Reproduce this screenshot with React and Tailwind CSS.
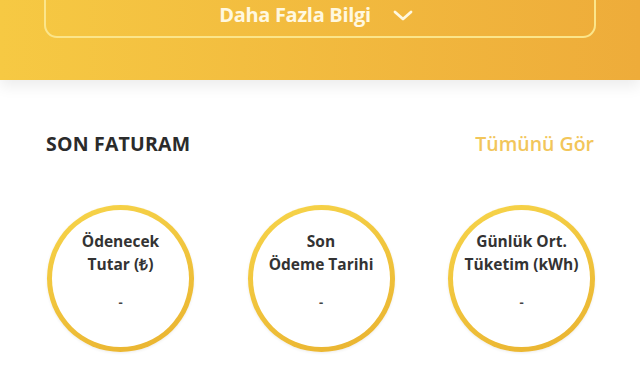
import React from "react";

function Ring({ l1, l2 }) {
  return (
    <div className="w-[147px] h-[147px] rounded-full p-[5px] bg-[linear-gradient(160deg,#f7d54a,#e9b22f)] shadow-[0_1px_3px_rgba(0,0,0,0.08)]">
      <div className="w-full h-full rounded-full bg-white flex flex-col items-center pt-[20px]">
        <div className="text-[15.5px] leading-[23px] font-bold text-[#333] text-center">{l1}</div>
        <div className="text-[15.5px] leading-[23px] font-bold text-[#333] text-center">{l2}</div>
        <div className="mt-[20px] text-[13px] leading-none font-bold text-[#444]">-</div>
      </div>
    </div>
  );
}

export default function App() {
  return (
    <div className="w-[640px] h-[375px] overflow-hidden bg-white" style={{ fontFamily: '"Open Sans", "Liberation Sans", sans-serif' }}>
      <div className="h-[80px] flex flex-col bg-[linear-gradient(90deg,#f6c943,#eeac3a)] shadow-[0_6px_14px_rgba(0,0,0,0.08)] px-[44px] relative z-10">
        <div className="-mt-[14px] h-[52px] border-2 border-[#fbe58a] rounded-[13px] flex items-end justify-center pb-[11px] pr-[6px]">
          <span className="text-[20px] font-bold text-[#fff8e0] tracking-[-0.3px] leading-none">Daha Fazla Bilgi</span>
          <svg className="ml-[20px] mb-[3px]" width="24" height="13" viewBox="0 0 24 13" fill="none">
            <path d="M4 3 L12 10 L20 3" stroke="#fff8e0" strokeWidth="2.8" strokeLinecap="round" strokeLinejoin="round" />
          </svg>
        </div>
      </div>
      <div className="flex items-center justify-between pl-[46px] pr-[46px] pt-[49px]">
        <span className="text-[19.5px] font-bold text-[#2b2b2b] tracking-[0.2px]">SON FATURAM</span>
        <span className="text-[19.5px] font-semibold text-[#f2c65a]">Tümünü Gör</span>
      </div>
      <div className="flex justify-between pl-[47px] pr-[45px] mt-[47px]">
        <Ring l1="Ödenecek" l2="Tutar (₺)" />
        <Ring l1="Son" l2="Ödeme Tarihi" />
        <Ring l1="Günlük Ort." l2="Tüketim (kWh)" />
      </div>
    </div>
  );
}
